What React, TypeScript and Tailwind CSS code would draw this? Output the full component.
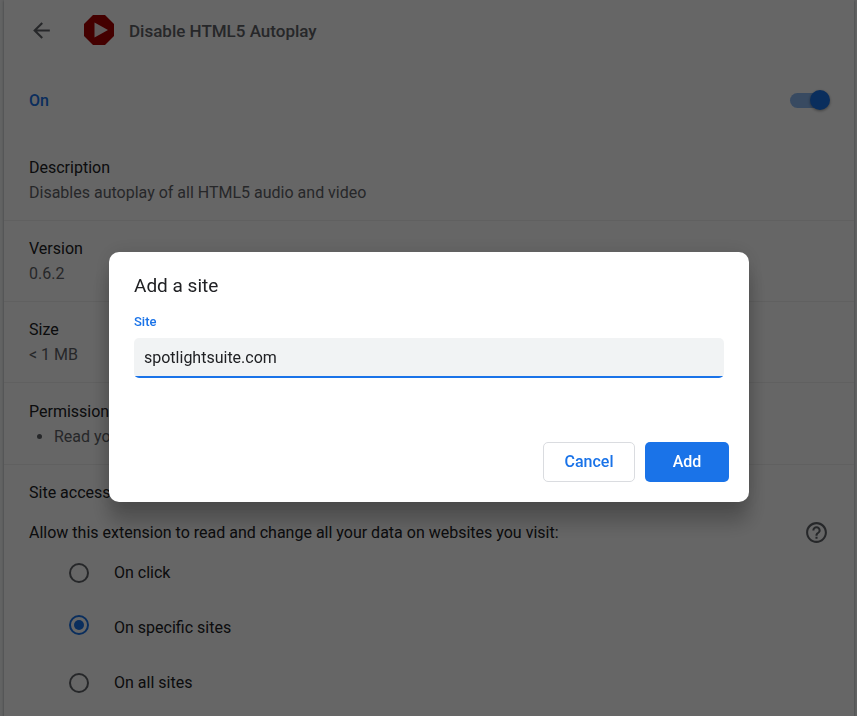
import React, { useState } from "react";

const details = [
  { title: "Description", value: "Disables autoplay of all HTML5 audio and video" },
  { title: "Version", value: "0.6.2" },
  { title: "Size", value: "< 1 MB" },
];

const accessOptions = [
  { id: "click", label: "On click" },
  { id: "specific", label: "On specific sites" },
  { id: "all", label: "On all sites" },
];

const ArrowBack = () => (
  <svg width="25" height="25" viewBox="0 0 24 24" fill="currentColor" aria-hidden="true">
    <path d="M20 11H7.83l5.59-5.59L12 4l-8 8 8 8 1.41-1.41L7.83 13H20v-2z" />
  </svg>
);

const HelpIcon = () => (
  <svg width="25" height="25" viewBox="0 0 24 24" fill="currentColor" aria-hidden="true">
    <path d="M11 18h2v-2h-2v2zm1-16C6.48 2 2 6.48 2 12s4.48 10 10 10 10-4.48 10-10S17.52 2 12 2zm0 18c-4.41 0-8-3.59-8-8s3.59-8 8-8 8 3.59 8 8-3.59 8-8 8zm0-14c-2.21 0-4 1.79-4 4h2c0-1.1.9-2 2-2s2 .9 2 2c0 2-3 1.75-3 5h2c0-2.25 3-2.5 3-5 0-2.21-1.79-4-4-4z" />
  </svg>
);

const ExtensionLogo = () => (
  <svg width="30" height="30" viewBox="0 0 30 30" aria-hidden="true">
    <path d="M9 0h12l9 9v12l-9 9H9l-9-9V9z" fill="#aa0000" />
    <path d="M10.5 7.5v15L24 15z" fill="#f1e6e6" />
  </svg>
);

const DetailsPage = () => {
  const [enabled, setEnabled] = useState(true);
  const [access, setAccess] = useState("specific");

  return (
    <main className="mr-[3px] ml-1 min-h-screen bg-white shadow-[0_1px_2px_rgba(60,64,67,0.3),0_1px_3px_1px_rgba(60,64,67,0.15)]">
      <header className="flex h-[60px] items-center pl-[25px]">
        <button type="button" aria-label="Back" className="text-[#5f6368]">
          <ArrowBack />
        </button>
        <div className="ml-[30px]">
          <ExtensionLogo />
        </div>
        <h1 className="ml-[15px] pt-1 text-[17px] font-medium text-[#5f6368]">Disable HTML5 Autoplay</h1>
      </header>

      <div className="flex h-20 items-center justify-between pr-6 pl-[25px] font-medium text-[#1a73e8]">
        <label htmlFor="enabled" className="pt-0.5">On</label>
        <input
          id="enabled"
          type="checkbox"
          role="switch"
          checked={enabled}
          onChange={(e) => setEnabled(e.target.checked)}
          className="flex h-5 w-10 appearance-none items-center before:h-[15px] before:w-[35px] before:shrink-0 before:rounded-full before:bg-[#1a73e8]/50 after:-ml-[15px] after:size-5 after:shrink-0 after:rounded-full after:bg-[#1a73e8] after:shadow-[0_1px_3px_rgba(0,0,0,0.4)]"
        />
      </div>

      {details.map((item) => (
        <section key={item.title} className="border-b border-black/6 px-[25px] py-[15px] leading-[25px]">
          <h2>{item.title}</h2>
          <p className="text-[#5f6368]">{item.value}</p>
        </section>
      ))}

      <section className="border-b border-black/6 px-[25px] pt-4 pb-[15px] leading-[25px]">
        <h2>Permissions</h2>
        <ul className="list-disc pl-[25px] text-[#5f6368]">
          <li>Read your browsing history</li>
        </ul>
      </section>

      <section className="px-[25px] pt-[15px] leading-[25px]">
        <h2>Site access</h2>
        <div className="mt-[15px] flex items-center justify-between">
          <p id="access-label">Allow this extension to read and change all your data on websites you visit:</p>
          <button type="button" aria-label="Learn more" className="text-[#5f6368]">
            <HelpIcon />
          </button>
        </div>
        <div role="radiogroup" aria-labelledby="access-label" className="pl-10">
          {accessOptions.map((option) => (
            <label key={option.id} className="flex h-[55px] items-start gap-[25px] pt-[15px]">
              <input
                type="radio"
                name="access"
                checked={access === option.id}
                onChange={() => setAccess(option.id)}
                className="mt-[3px] grid size-5 shrink-0 appearance-none place-items-center rounded-full border-2 border-[#5f6368] checked:mt-0 checked:border-[#1a73e8] checked:before:size-[10px] checked:before:rounded-full checked:before:bg-[#1a73e8]"
              />
              {option.label}
            </label>
          ))}
        </div>
      </section>
    </main>
  );
};

const AddSiteDialog = () => {
  const [site, setSite] = useState("spotlightsuite.com");

  return (
    <div className="fixed inset-0 flex items-start justify-center bg-black/60 pt-[252px] pl-px">
      <form
        role="dialog"
        aria-labelledby="dialog-title"
        onSubmit={(e) => e.preventDefault()}
        className="w-full max-w-[640px] rounded-[10px] bg-white p-5 shadow-[0_0_20px_rgba(0,0,0,0.12),0_20px_20px_rgba(0,0,0,0.24)]"
      >
        <div className="px-[5px]">
          <h2 id="dialog-title" className="text-[19px] leading-7">Add a site</h2>
          <label htmlFor="site" className="mt-3 block text-[13px] leading-5 font-medium text-[#1a73e8]">Site</label>
          <input
            id="site"
            type="text"
            value={site}
            onChange={(e) => setSite(e.target.value)}
            className="mt-1.5 block h-10 w-full rounded-[5px] bg-[linear-gradient(to_top,#1a73e8_2px,#f1f3f4_2px)] px-[10px] pb-0.5 outline-none"
          />
        </div>
        <div className="mt-16 flex justify-end gap-[10px] font-medium">
          <button type="button" className="h-10 w-[92px] rounded-[5px] border border-[#dadce0] text-[#1a73e8]">Cancel</button>
          <button type="submit" className="h-10 w-[84px] rounded-[5px] bg-[#1a73e8] text-white">Add</button>
        </div>
      </form>
    </div>
  );
};

export default function App() {
  return (
    <div className="min-h-screen bg-[#f8f9fa] font-[Roboto,sans-serif] text-base text-[#202124]">
      <DetailsPage />
      <AddSiteDialog />
    </div>
  );
}
